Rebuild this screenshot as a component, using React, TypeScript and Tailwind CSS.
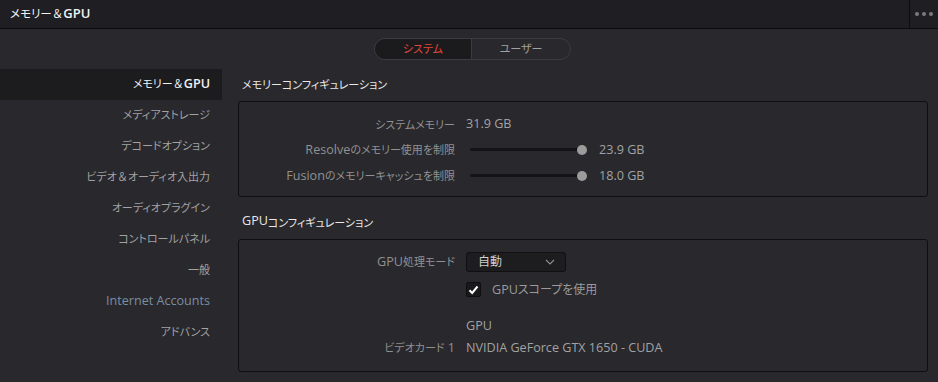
import React from 'react';

const font = { fontFamily: '"Open Sans", "Noto Sans CJK JP", sans-serif' };

// Latin runs are set a bit larger than kana/kanji, like the original UI font
function T({ s, latin = 'text-[12.6px]', jp = 'text-[11px]' }: { s: string; latin?: string; jp?: string }) {
  const parts = s.split(/([\x20-\x7E]+|＆)/).filter(Boolean);
  return (
    <>
      {parts.map((p, i) => {
        if (p === '＆')
          return (
            <span key={i} className={`${jp} [font-feature-settings:normal]`}>
              {p}
            </span>
          );
        return (
          <span key={i} className={/^[\x20-\x7E]+$/.test(p) ? latin : jp}>
            {p}
          </span>
        );
      })}
    </>
  );
}

const sideItems = [
  'メモリー＆GPU',
  'メディアストレージ',
  'デコードオプション',
  'ビデオ＆オーディオ入出力',
  'オーディオプラグイン',
  'コントロールパネル',
  '一般',
  'Internet Accounts',
  'アドバンス',
];

function Slider() {
  return (
    <div className="relative flex items-center w-[118px] h-[12px] ml-[4px]">
      <div className="w-[112px] h-[3px] rounded-full bg-[#141416]" />
      <div className="absolute left-[107px] w-[10px] h-[10px] rounded-full bg-[#9c9c9c]" />
    </div>
  );
}

function Row({ label, children, h = 'h-[25px]' }: { label: string; children?: React.ReactNode; h?: string }) {
  return (
    <div className={`flex items-center ${h}`}>
      <div className="w-[216px] text-right text-[#919191]">
        <T s={label} />
      </div>
      <div className="ml-[11px] flex items-center text-[#a2a2a2]">{children}</div>
    </div>
  );
}

export default function App() {
  return (
    <div style={font} className="w-[938px] h-[382px] bg-[#28282d] text-[12px] overflow-hidden [font-feature-settings:'palt'] flex flex-col">
      {/* title bar */}
      <div className="h-[29px] flex bg-[#1f1f23] border-b border-[#0c0c0e]">
        <div className="flex-1 flex items-center pl-[10px] text-[#f2f2f2]">
          <T s="メモリー＆GPU" latin="text-[13px] font-semibold" jp="text-[11.5px]" />
        </div>
        <div className="w-[29px] border-l border-[#0c0c0e] flex items-center justify-center gap-[3px]">
          <span className="w-[4px] h-[4px] rounded-full bg-[#7c7c80]" />
          <span className="w-[4px] h-[4px] rounded-full bg-[#7c7c80]" />
          <span className="w-[4px] h-[4px] rounded-full bg-[#7c7c80]" />
        </div>
      </div>

      {/* tabs */}
      <div className="flex justify-center pt-[9px] pl-[7px]">
        <div className="flex h-[22px] rounded-full border border-[#3b3b40] overflow-hidden">
          <div className="w-[97px] flex items-center justify-center bg-[#1b1b1e] text-[#e4473a] border-r border-[#3b3b40]">
            <T s="システム" />
          </div>
          <div className="w-[98px] flex items-center justify-center text-[#a0a0a0]">
            <T s="ユーザー" />
          </div>
        </div>
      </div>

      <div className="flex pt-[9px]">
        {/* sidebar */}
        <div className="w-[222px] flex flex-col">
          {sideItems.map((s, i) => (
            <div
              key={s}
              className={`h-[31px] flex items-center justify-end pr-[12px] ${
                i === 0 ? 'bg-[#1c1c1f] text-[#f2f2f2]' : s === 'Internet Accounts' ? 'text-[#7a8ea2]' : 'text-[#a2a2a2]'
              }`}
            >
              <T s={s} latin={i === 0 ? 'text-[12.6px] font-semibold' : 'text-[12.6px]'} />
            </div>
          ))}
        </div>

        {/* content */}
        <div className="flex-1 pl-[16px] pr-[10px]">
          <div className="h-[32px] flex items-center pl-[4px] text-[#e8e8e8]">
            <T s="メモリーコンフィギュレーション" />
          </div>
          <div className="border border-[#0f0f11] rounded-[3px] pt-[10px] pb-[7px]">
            <Row label="システムメモリー">
              <T s="31.9 GB" />
            </Row>
            <Row label="Resolveのメモリー使用を制限" h="h-[26px]">
              <Slider />
              <span className="ml-[11px]">
                <T s="23.9 GB" />
              </span>
            </Row>
            <Row label="Fusionのメモリーキャッシュを制限" h="h-[26px]">
              <Slider />
              <span className="ml-[11px]">
                <T s="18.0 GB" />
              </span>
            </Row>
          </div>

          <div className="h-[42px] flex items-end pb-[8px] pl-[4px] text-[#e8e8e8]">
            <T s="GPUコンフィギュレーション" />
          </div>
          <div className="border border-[#0f0f11] rounded-[3px] pt-[9px] pb-[12px]">
            <Row label="GPU処理モード" h="h-[26px]">
              <div className="w-[100px] h-[20px] flex items-center justify-between pl-[11px] pr-[10px] bg-[#1d1d20] border border-[#101012] rounded-[3px] text-[#cfcfcf]">
                <span className="text-[12px]">自動</span>
                <svg width="10" height="6" viewBox="0 0 10 6">
                  <path d="M1 1 L5 5 L9 1" fill="none" stroke="#8f8f8f" strokeWidth="1.1" />
                </svg>
              </div>
            </Row>
            <Row label="" h="h-[30px]">
              <div className="w-[15px] h-[15px] flex items-center justify-center bg-[#19191b] border border-[#0e0e10] rounded-[2px]">
                <svg width="11" height="10" viewBox="0 0 11 10">
                  <path d="M1.5 5.2 L4.2 8 L9.5 1.5" fill="none" stroke="#ffffff" strokeWidth="2" />
                </svg>
              </div>
              <span className="ml-[11px] text-[#9a9a9a]">
                <T s="GPUスコープを使用" jp="text-[12px]" />
              </span>
            </Row>
            <div className="h-[10px]" />
            <Row label="" h="h-[22px]">
              <T s="GPU" />
            </Row>
            <Row label="ビデオカード 1" h="h-[22px]">
              <T s="NVIDIA GeForce GTX 1650 - CUDA" />
            </Row>
          </div>
        </div>
      </div>
    </div>
  );
}
